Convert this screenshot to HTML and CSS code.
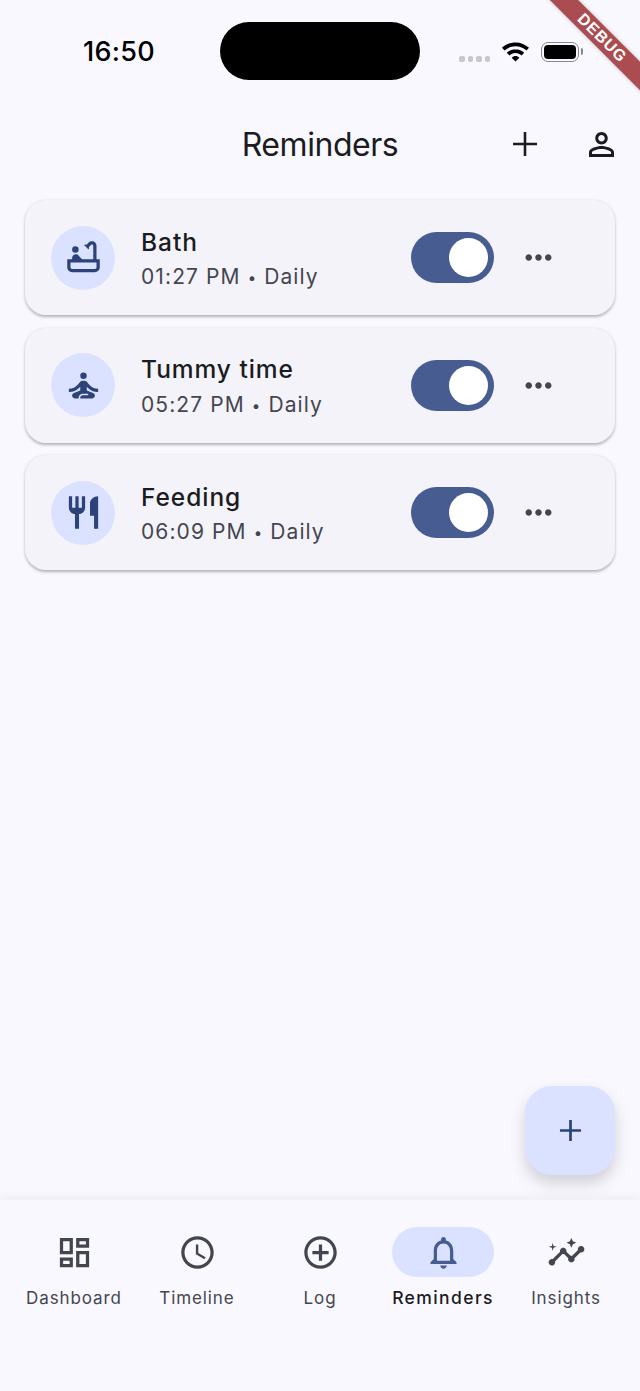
FILE: index.html
```html
<!DOCTYPE html>
<html lang="en">
<head>
    <meta charset="UTF-8">
    <meta name="viewport" content="width=device-width, initial-scale=1.0">
    <title>Reminders</title>
    <link rel="stylesheet" href="styles.css">
</head>
<body>
    <div class="screen">
        <!-- status bar -->
        <div class="status-bar">
            <span class="clock">16:50</span>
            <div class="island"></div>
            <div class="signal"><i></i><i></i><i></i><i></i></div>
            <svg class="wifi" viewBox="1 1.5 24 17"><path d="M13 1.5C8.3 1.5 4.1 3.3 1 6.3l2.3 2.4C5.8 6.3 9.2 4.8 13 4.8s7.2 1.5 9.700 3.900L25 6.300C21.900 3.300 17.700 1.500 13 1.500z"/><path d="M13 7.600c-3 0-5.700 1.200-7.700 3.100l2.300 2.400c1.400-1.300 3.300-2.200 5.400-2.200s4 .9 5.400 2.200l2.300-2.400c-2-1.900-4.700-3.100-7.700-3.100z"/><path d="M13 13.600c-1.300 0-2.500.5-3.400 1.400l3.400 3.500 3.400-3.500c-.9-.9-2.100-1.400-3.400-1.400z"/></svg>
            <div class="battery"><div class="battery-fill"></div></div>
        </div>

        <!-- top bar -->
        <header class="top-bar">
            <h1>Reminders</h1>
            <button class="top-btn add-btn">
                <svg viewBox="0 0 26 26"><path d="M13 1v24M1 13h24"/></svg>
            </button>
            <button class="top-btn person-btn">
                <svg viewBox="4 4 16 16"><path d="M12 5.900c1.160 0 2.100.94 2.100 2.100s-.94 2.100-2.100 2.100S9.900 9.160 9.900 8s.94-2.100 2.100-2.100m0 9c2.970 0 6.100 1.460 6.100 2.100v1.100H5.900V17c0-.64 3.130-2.100 6.100-2.100M12 4C9.790 4 8 5.790 8 8s1.790 4 4 4 4-1.790 4-4-1.790-4-4-4zm0 9c-2.670 0-8 1.340-8 4v3h16v-3c0-2.660-5.330-4-8-4z"/></svg>
            </button>
        </header>

        <!-- reminder list -->
        <main class="list">
            <div class="card">
                <div class="avatar">
                    <svg viewBox="0 0 24 24"><circle cx="7" cy="7" r="2"/><path d="M20 13V4.830C20 3.270 18.730 2 17.170 2c-.75 0-1.470.3-2 .83l-1.250 1.250c-.16-.05-.33-.08-.51-.08-.4 0-.77.12-1.080.32l2.760 2.760c.2-.31.32-.68.32-1.080 0-.18-.03-.35-.07-.51l1.250-1.250c.15-.15.36-.24.58-.24.46 0 .83.37.83.83V13h-6.850c-.3-.21-.57-.45-.82-.72l-1.400-1.550c-.19-.21-.43-.38-.69-.5-.31-.15-.65-.23-1-.23C6 10 5 11 5 12.250V13H2v5c0 1.650 1.350 3 3 3h14c1.650 0 3-1.350 3-3v-5h-2zm0 5c0 .55-.45 1-1 1H5c-.55 0-1-.45-1-1v-3h16v3z"/></svg>
                </div>
                <div class="card-text">
                    <div class="card-title">Bath</div>
                    <div class="card-sub">01:27 PM <span class="sep">•</span> Daily</div>
                </div>
                <div class="switch"><div class="thumb"></div></div>
                <svg class="more" viewBox="0 0 24 24"><path d="M6 10c-1.100 0-2 .9-2 2s.9 2 2 2 2-.9 2-2-.9-2-2-2zm12 0c-1.100 0-2 .9-2 2s.9 2 2 2 2-.9 2-2-.9-2-2-2zm-6 0c-1.100 0-2 .9-2 2s.9 2 2 2 2-.9 2-2-.9-2-2-2z"/></svg>
            </div>
            <div class="card">
                <div class="avatar">
                    <svg viewBox="0 0 24 24"><circle cx="12" cy="6" r="2"/><path d="M21 16v-2c-2.240 0-4.160-.96-5.600-2.680l-1.340-1.600c-.38-.46-.94-.72-1.530-.72h-1.050c-.59 0-1.150.26-1.530.72l-1.340 1.600C7.160 13.040 5.240 14 3 14v2c2.770 0 5.190-1.170 7-3.250V15l-3.880 1.550c-.67.27-1.120.93-1.120 1.660C5 19.200 5.800 20 6.790 20H9v-.5c0-1.380 1.120-2.500 2.500-2.500h3c.28 0 .5.22.5.5s-.22.5-.5.5h-3c-.83 0-1.500.67-1.500 1.500v.5h7.210c.99 0 1.790-.8 1.790-1.790 0-.73-.45-1.390-1.120-1.660L14 15v-2.250c1.810 2.080 4.230 3.250 7 3.250z"/></svg>
                </div>
                <div class="card-text">
                    <div class="card-title">Tummy time</div>
                    <div class="card-sub">05:27 PM <span class="sep">•</span> Daily</div>
                </div>
                <div class="switch"><div class="thumb"></div></div>
                <svg class="more" viewBox="0 0 24 24"><path d="M6 10c-1.100 0-2 .9-2 2s.9 2 2 2 2-.9 2-2-.9-2-2-2zm12 0c-1.100 0-2 .9-2 2s.9 2 2 2 2-.9 2-2-.9-2-2-2zm-6 0c-1.100 0-2 .9-2 2s.9 2 2 2 2-.9 2-2-.9-2-2-2z"/></svg>
            </div>
            <div class="card">
                <div class="avatar">
                    <svg viewBox="0 0 24 24"><path d="M11 9H9V2H7v7H5V2H3v7c0 2.120 1.660 3.840 3.750 3.970V22h2.500v-9.030C11.340 12.840 13 11.120 13 9V2h-2v7zm5-3v8h2.500v8H21V2c-2.760 0-5 2.240-5 4z"/></svg>
                </div>
                <div class="card-text">
                    <div class="card-title">Feeding</div>
                    <div class="card-sub">06:09 PM <span class="sep">•</span> Daily</div>
                </div>
                <div class="switch"><div class="thumb"></div></div>
                <svg class="more" viewBox="0 0 24 24"><path d="M6 10c-1.100 0-2 .9-2 2s.9 2 2 2 2-.9 2-2-.9-2-2-2zm12 0c-1.100 0-2 .9-2 2s.9 2 2 2 2-.9 2-2-.9-2-2-2zm-6 0c-1.100 0-2 .9-2 2s.9 2 2 2 2-.9 2-2-.9-2-2-2z"/></svg>
            </div>
        </main>

        <!-- bottom nav -->
        <nav class="bottom-nav">
            <div class="nav-item">
                <div class="nav-icon"><svg viewBox="0 0 24 24"><path d="M19 5v2h-4V5h4M9 5v6H5V5h4m10 8v6h-4v-6h4M9 17v2H5v-2h4M21 3h-8v6h8V3zM11 3H3v10h8V3zm10 8h-8v10h8V11zm-10 4H3v6h8v-6z"/></svg></div>
                <span>Dashboard</span>
            </div>
            <div class="nav-item">
                <div class="nav-icon"><svg viewBox="0 0 24 24"><path d="M11.990 2C6.470 2 2 6.480 2 12s4.470 10 9.990 10C17.520 22 22 17.520 22 12S17.520 2 11.990 2zM12 20c-4.420 0-8-3.580-8-8s3.580-8 8-8 8 3.580 8 8-3.580 8-8 8zm.5-13H11v6l5.250 3.150.75-1.230-4.500-2.670z"/></svg></div>
                <span>Timeline</span>
            </div>
            <div class="nav-item">
                <div class="nav-icon"><svg viewBox="0 0 24 24"><path d="M13 7h-2v4H7v2h4v4h2v-4h4v-2h-4V7zm-1-5C6.480 2 2 6.480 2 12s4.480 10 10 10 10-4.480 10-10S17.520 2 12 2zm0 18c-4.410 0-8-3.590-8-8s3.590-8 8-8 8 3.590 8 8-3.590 8-8 8z"/></svg></div>
                <span>Log</span>
            </div>
            <div class="nav-item active">
                <div class="nav-icon"><svg viewBox="0 0 24 24"><path d="M12 22c1.100 0 2-.9 2-2h-4c0 1.100.9 2 2 2zm6-6v-5c0-3.070-1.630-5.640-4.500-6.320V4c0-.83-.67-1.500-1.500-1.500s-1.500.67-1.500 1.500v.68C7.640 5.360 6 7.920 6 11v5l-2 2v1h16v-1l-2-2zm-2 1H8v-6c0-2.480 1.510-4.500 4-4.500s4 2.020 4 4.500v6z"/></svg></div>
                <span>Reminders</span>
            </div>
            <div class="nav-item">
                <div class="nav-icon"><svg viewBox="0 0 24 24"><path d="M21 8c-1.450 0-2.260 1.440-1.930 2.510l-3.550 3.560c-.3-.09-.74-.09-1.040 0l-2.550-2.550C12.270 10.450 11.460 9 10 9c-1.450 0-2.270 1.440-1.930 2.520l-4.560 4.550C2.440 15.740 1 16.550 1 18c0 1.100.9 2 2 2 1.450 0 2.260-1.440 1.930-2.510l4.550-4.560c.3.09.74.09 1.040 0l2.550 2.550C12.730 16.550 13.540 18 15 18c1.450 0 2.270-1.440 1.930-2.520l3.560-3.550c1.070.33 2.510-.48 2.510-1.930 0-1.100-.9-2-2-2z"/><path d="M15 9l.94-2.070L18 6l-2.060-.93L15 3l-.92 2.070L12 6l2.080.93z"/><path d="M3.500 11L4 9l2-.5L4 8l-.5-2L3 8l-2 .5L3 9z"/></svg></div>
                <span>Insights</span>
            </div>
        </nav>

        <!-- floating add button -->
        <button class="fab">
            <svg viewBox="0 0 24 24"><path d="M12 1v22M1 12h22"/></svg>
        </button>

        <!-- debug ribbon -->
        <div class="debug-ribbon">DEBUG</div>
    </div>
</body>
</html>
```

FILE: styles.css
```css
/* base */
html, body {
    margin: 0;
    padding: 0;
}

body {
    font-family: Inter, "Noto Sans", sans-serif;
    background-color: #f9f8ff;
    color: #1a1c20;
}

.screen {
    position: relative;
    width: 640px;
    height: 1391px;
    overflow: hidden;
    display: flex;
    flex-direction: column;
}

/* status bar */
.status-bar {
    height: 100px;
    box-sizing: border-box;
    padding: 22px 0 0 83px;
    display: flex;
    align-items: flex-start;
    flex-shrink: 0;
}

.clock {
    width: 137px;
    margin-top: 14px;
    font-size: 27px;
    line-height: 32px;
    font-weight: 500;
    letter-spacing: 0.3px;
    color: #000;
}

.island {
    width: 200px;
    height: 58px;
    border-radius: 29px;
    background-color: #000;
}

.signal {
    display: flex;
    gap: 3px;
    margin: 34px 0 0 39px;
}

.signal i {
    width: 5.500px;
    height: 6px;
    border-radius: 2px;
    background-color: #c8c8cc;
}

.wifi {
    width: 27px;
    height: 20px;
    margin: 20px 0 0 12px;
    fill: #000;
}

.battery {
    position: relative;
    width: 38px;
    height: 20px;
    box-sizing: border-box;
    margin: 20px 0 0 12px;
    padding: 2px;
    border: 1.500px solid #85858a;
    border-radius: 7px;
}

.battery::after {
    content: "";
    position: absolute;
    top: 5px;
    right: -5px;
    width: 2px;
    height: 7px;
    border-radius: 0 2px 2px 0;
    background-color: #85858a;
}

.battery-fill {
    height: 100%;
    border-radius: 4px;
    background-color: #000;
}

/* top bar */
.top-bar {
    height: 88px;
    flex-shrink: 0;
    position: relative;
    display: flex;
    align-items: center;
    justify-content: flex-end;
    padding-right: 26px;
}

.top-bar h1 {
    position: absolute;
    left: 0;
    right: 0;
    top: 24px;
    margin: 0;
    text-align: center;
    font-size: 32px;
    line-height: 42px;
    font-weight: 400;
    letter-spacing: -0.450px;
    color: #1a1c20;
}

.top-btn {
    padding: 0;
    border: none;
    background: none;
    display: flex;
}

.add-btn {
    margin-right: 51px;
}

.add-btn svg {
    width: 26px;
    height: 26px;
    fill: none;
    stroke: #1a1c20;
    stroke-width: 2.600;
}

.person-btn svg {
    width: 25px;
    height: 25px;
    fill: #1a1c20;
}

/* reminder list */
.list {
    flex: 1;
    padding: 12px 25px 0;
    display: flex;
    flex-direction: column;
    gap: 12.500px;
}

.card {
    height: 115px;
    box-sizing: border-box;
    display: flex;
    align-items: center;
    padding-left: 26px;
    background-color: #f4f3fa;
    border-radius: 21px;
    box-shadow: 0 1.500px 3px rgba(0, 0, 0, 0.28);
}

.avatar {
    width: 64px;
    height: 64px;
    flex-shrink: 0;
    border-radius: 50%;
    background-color: #dae2ff;
    display: flex;
    align-items: center;
    justify-content: center;
}

.avatar svg {
    width: 39px;
    height: 39px;
    fill: #2c4278;
}

.card-text {
    flex: 1;
    margin-left: 26px;
    padding-top: 4.500px;
}

.card-title {
    font-size: 24.500px;
    line-height: 34px;
    font-weight: 500;
    letter-spacing: 0.950px;
    color: #1a1c20;
}

.card-sub {
    margin-top: 2.500px;
    font-size: 21px;
    line-height: 32px;
    letter-spacing: 1.100px;
    color: #44464f;
}

.sep {
    position: relative;
    top: -1px;
    font-size: 15px;
}

.switch {
    width: 83px;
    height: 51px;
    box-sizing: border-box;
    padding: 6px;
    border-radius: 26px;
    background-color: #475d92;
    display: flex;
    justify-content: flex-end;
}

.thumb {
    width: 39px;
    height: 39px;
    border-radius: 50%;
    background-color: #fff;
}

.more {
    width: 39px;
    height: 39px;
    margin: 0 57px 0 25px;
    fill: #44464f;
}

/* bottom nav */
.bottom-nav {
    height: 191px;
    flex-shrink: 0;
    box-sizing: border-box;
    padding: 27px 12.500px 0;
    display: grid;
    grid-template-columns: repeat(5, 123px);
    align-content: start;
    background-color: #f9f8ff;
    box-shadow: 0 -3px 10px rgba(0, 0, 0, 0.05);
}

.nav-item {
    display: flex;
    flex-direction: column;
    align-items: center;
    font-size: 17px;
    line-height: 24px;
    letter-spacing: 0.900px;
    font-weight: 400;
    color: #44464f;
    white-space: nowrap;
}

.nav-icon {
    width: 102px;
    height: 50px;
    margin-bottom: 9px;
    border-radius: 25px;
    display: flex;
    align-items: center;
    justify-content: center;
}

.nav-icon svg {
    width: 39px;
    height: 39px;
    fill: #44464f;
}

.nav-item.active {
    color: #1a1c20;
    font-size: 17.500px;
    font-weight: 500;
    letter-spacing: 1.400px;
}

.nav-item.active .nav-icon {
    background-color: #dae2ff;
}

.nav-item.active .nav-icon svg {
    fill: #475d92;
}

/* floating add button */
.fab {
    position: absolute;
    left: 525px;
    top: 1086px;
    width: 90px;
    height: 89px;
    padding: 0;
    border: none;
    border-radius: 27px;
    background-color: #dae2ff;
    box-shadow: 0 8px 16px rgba(0, 0, 0, 0.17);
    display: flex;
    align-items: center;
    justify-content: center;
}

.fab svg {
    width: 23px;
    height: 23px;
    fill: none;
    stroke: #2c4278;
    stroke-width: 2.800;
}

/* debug ribbon */
.debug-ribbon {
    position: absolute;
    top: 28px;
    left: 522px;
    width: 160px;
    height: 20px;
    transform: rotate(45deg);
    background-color: #ab4d50;
    box-shadow: 0 0 4px rgba(0, 0, 0, 0.25);
    color: #fff;
    font-family: "Liberation Sans", sans-serif;
    font-size: 16px;
    line-height: 20px;
    font-weight: 700;
    letter-spacing: 0.800px;
    text-align: center;
}
```
